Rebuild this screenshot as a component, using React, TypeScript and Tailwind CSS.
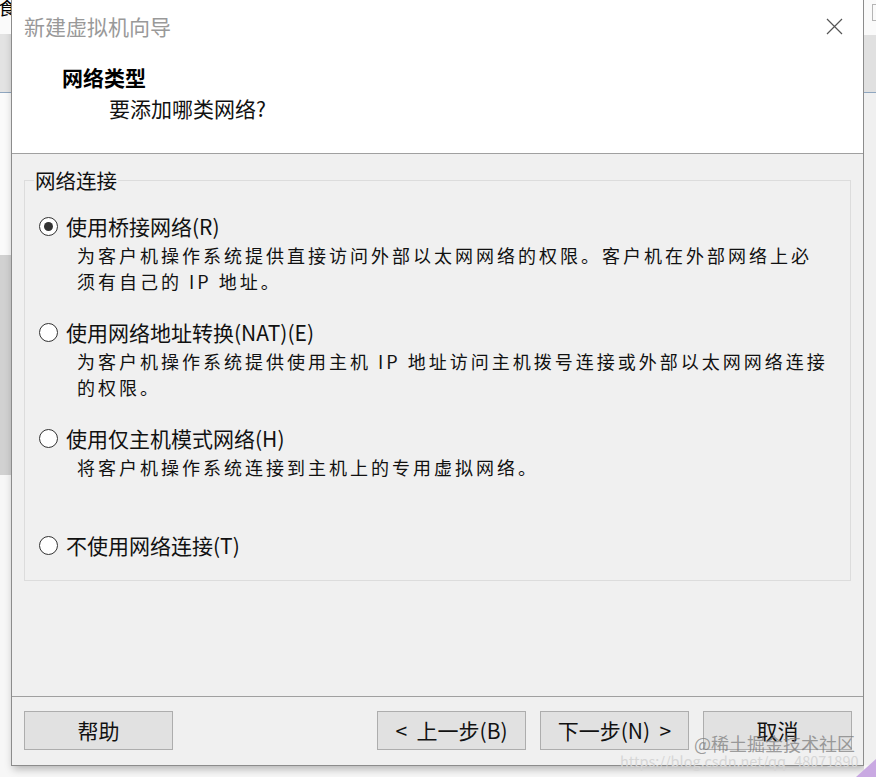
import React from "react";

const font = "font-['Noto_Sans_CJK_SC',sans-serif]";

interface Option {
  label: string;
  checked?: boolean;
  desc: string[];
  gapAfter: string;
}

const options: Option[] = [
  {
    label: "使用桥接网络(R)",
    checked: true,
    desc: [
      "为客户机操作系统提供直接访问外部以太网网络的权限。客户机在外部网络上必",
      "须有自己的 IP 地址。",
    ],
    gapAfter: "mb-[24px]",
  },
  {
    label: "使用网络地址转换(NAT)(E)",
    desc: [
      "为客户机操作系统提供使用主机 IP 地址访问主机拨号连接或外部以太网网络连接",
      "的权限。",
    ],
    gapAfter: "mb-[24px]",
  },
  {
    label: "使用仅主机模式网络(H)",
    desc: ["将客户机操作系统连接到主机上的专用虚拟网络。"],
    gapAfter: "mb-[51px]",
  },
  {
    label: "不使用网络连接(T)",
    desc: [],
    gapAfter: "mb-0",
  },
];

function Radio({ checked }: { checked?: boolean }) {
  return (
    <span className="w-[19px] h-[19px] rounded-full border border-[#333333] bg-white flex items-center justify-center shrink-0">
      {checked && <span className="w-[9px] h-[9px] rounded-full bg-[#333333]" />}
    </span>
  );
}

function WizardButton({ children }: { children: React.ReactNode }) {
  return (
    <button className="w-[149px] h-[39px] bg-[#e1e1e1] border border-[#adadad] text-[21px] leading-none text-[#111111] flex items-center justify-center whitespace-pre">
      {children}
    </button>
  );
}

export default function App() {
  return (
    <div className={`relative w-[876px] h-[777px] bg-[#f7f7f7] overflow-hidden flex ${font}`}>
      {/* window behind, left edge */}
      <div className="w-[11px] flex flex-col shrink-0">
        <div className="h-[34px] bg-[#fafafa] overflow-hidden relative">
          <span className="absolute left-[-2px] top-[-6px] text-[18px] text-black">食</span>
        </div>
        <div className="h-[59px] bg-[#e3e3e3] border-b border-[#8fa6bf]" />
        <div className="h-[162px] bg-[#fafafa]" />
        <div className="h-[220px] bg-[#d1d1d1]" />
        <div className="flex-1 bg-[#f7f7f7]" />
      </div>

      {/* dialog */}
      <div className="w-[853px] h-[766px] shrink-0 flex flex-col bg-[#f0f0f0] border border-[#8c8c8c] border-t-0 shadow-[2px_3px_8px_rgba(0,0,0,0.28)]">
        <div className="h-[154px] bg-white border-b border-[#a0a0a0] shrink-0">
          <div className="h-[52px] flex items-center justify-between pl-[12px] pr-[20px]">
            <span className="text-[21px] leading-[28px] text-[#999999]">新建虚拟机向导</span>
            <svg width="17" height="17" viewBox="0 0 17 17" className="text-[#555555]">
              <path d="M1 1L16 16M16 1L1 16" stroke="currentColor" strokeWidth="1.2" />
            </svg>
          </div>
          <div className="pl-[50px] mt-[12px] text-[21px] leading-[26px] font-bold text-black">网络类型</div>
          <div className="pl-[97px] mt-[5px] text-[21px] leading-[26px] text-[#111111]">要添加哪类网络?</div>
        </div>

        <div className="flex-1 px-[12px] pt-[14px]">
          <fieldset className="border border-[#dcdcdc] pl-[14px] pr-[10px] pb-[21px]">
            <legend className="ml-[-5px] px-[1px] text-[20.5px] leading-[24px] text-[#111111]">网络连接</legend>
            <div className="pt-[20px]">
              {options.map((o) => (
                <div key={o.label} className={o.gapAfter}>
                  <div className="h-[28px] flex items-center gap-[8px]">
                    <Radio checked={o.checked} />
                    <span className="text-[21px] leading-[28px] text-[#111111] whitespace-nowrap">{o.label}</span>
                  </div>
                  {o.desc.length > 0 && (
                    <div className="mt-[2px] pl-[38px]">
                      {o.desc.map((line) => (
                        <div
                          key={line}
                          className="text-[18px] leading-[26px] tracking-[3px] text-[#111111] whitespace-nowrap"
                        >
                          {line}
                        </div>
                      ))}
                    </div>
                  )}
                </div>
              ))}
            </div>
          </fieldset>
        </div>

        <div className="h-[69px] shrink-0 border-t border-[#a0a0a0] flex items-start pt-[14px] pl-[12px] pr-[11px]">
          <WizardButton>帮助</WizardButton>
          <div className="flex-1" />
          <div className="flex gap-[14px]">
            <WizardButton>{"<  上一步(B)"}</WizardButton>
            <WizardButton>{"下一步(N)  >"}</WizardButton>
            <WizardButton>取消</WizardButton>
          </div>
        </div>
      </div>

      {/* window behind, right edge */}
      <div className="flex-1 flex flex-col">
        <div className="h-[35px] bg-[#fafafa] relative">
          <span className="absolute left-[8px] top-[4px] w-[10px] h-[17px] border border-[#b5b5b5]" />
        </div>
        <div className="h-[58px] bg-[#e0e0e0] border-b border-[#8fa6bf]" />
        <div className="flex-1 bg-[#f0f0f0]" />
        <div className="h-[12px] bg-[#f7f7f7]" />
      </div>

      {/* watermark */}
      <span className="absolute left-[694px] top-[730px] text-[18px] leading-[26px] text-[#777777]/70 whitespace-nowrap">
        @稀土掘金技术社区
      </span>
      <span className="absolute left-[620px] top-[751px] text-[14.5px] leading-[20px] text-[#d6d6d6] whitespace-nowrap">
        https://blog.csdn.net/qq_48071890
      </span>
      <svg className="absolute right-0 bottom-0" width="20" height="18" viewBox="0 0 20 18">
        <path d="M20 0L20 18L0 18Z" fill="#c9a9e2" />
      </svg>
    </div>
  );
}
